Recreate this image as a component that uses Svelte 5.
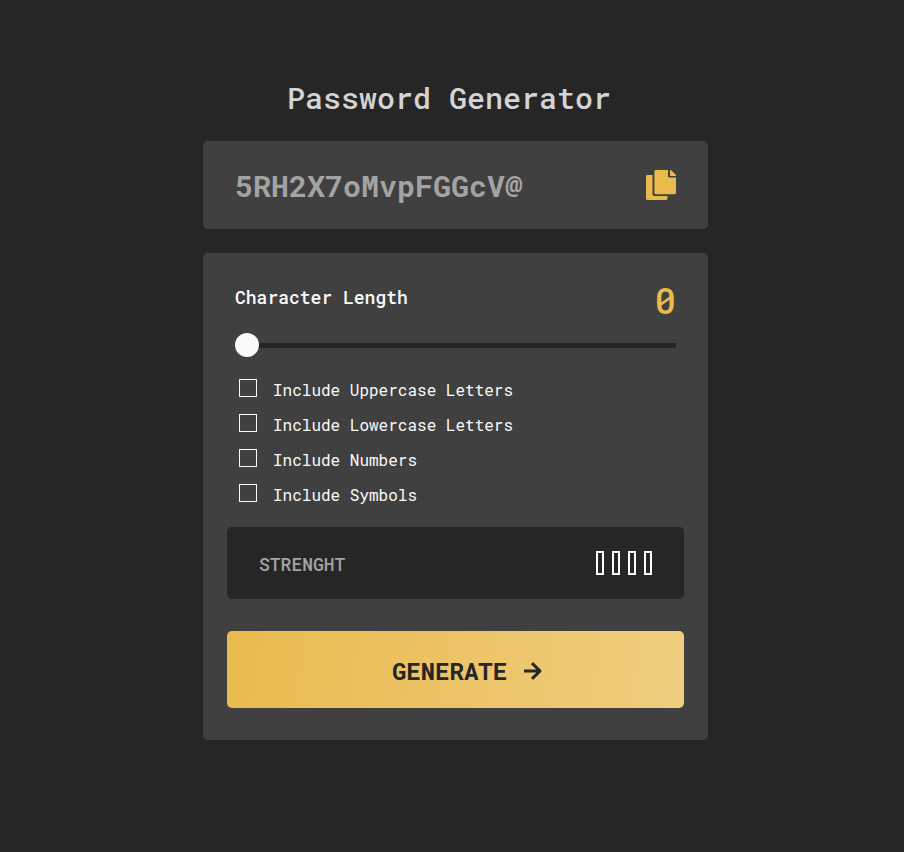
<script>
  const password = '5RH2X7oMvpFGGcV@';
  let length = $state(0);
  let options = $state([
    { id: 'uppercase', label: 'Include Uppercase Letters', checked: false },
    { id: 'lowercase', label: 'Include Lowercase Letters', checked: false },
    { id: 'numbers', label: 'Include Numbers', checked: false },
    { id: 'symbols', label: 'Include Symbols', checked: false }
  ]);
</script>

<main>
  <h1>Password Generator</h1>

  <section class="panel result">
    <output>{password}</output>
    <button class="copy" type="button" aria-label="Copy password">
      <svg width="30" height="30" viewBox="0 0 30 30" fill="currentColor" aria-hidden="true">
        <path d="M6.5 5v19c0 1.2.8 2 2 2h13v2.6c0 .8-.6 1.4-1.4 1.4H1.4C.6 30 0 29.4 0 28.6V6.4C0 5.6.6 5 1.4 5z" />
        <path d="M9.800 0H22v6.100C22 6.900 22.600 7.500 23.400 7.500H30v15.300c0 .8-.6 1.400-1.400 1.400H9.800c-.8 0-1.400-.6-1.400-1.400V1.400C8.400.6 9 0 9.800 0z" />
        <path d="M24 0h.4c.4 0 .7.100 1 .4l4.200 4.200c.3.300.4.600.4 1V6h-6z" />
      </svg>
    </button>
  </section>

  <form class="panel settings" onsubmit={(e) => e.preventDefault()}>
    <div class="length">
      <label for="length">Character Length</label>
      <output for="length">{length}</output>
    </div>
    <input id="length" class="slider" type="range" min="0" max="20" bind:value={length} />

    <div class="options">
      {#each options as option (option.id)}
        <div class="option">
          <input id={option.id} type="checkbox" bind:checked={option.checked} />
          <label for={option.id}>{option.label}</label>
        </div>
      {/each}
    </div>

    <div class="strength">
      <span>STRENGHT</span>
      <div class="bars">
        {#each Array(4) as _}
          <i></i>
        {/each}
      </div>
    </div>

    <button class="generate" type="submit">
      GENERATE
      <svg width="20" height="18" viewBox="0 0 20 18" fill="none" stroke="currentColor" stroke-width="3" stroke-linejoin="round" aria-hidden="true">
        <path d="M1 9h16M9 1.100L17 9l-8 7.900" />
      </svg>
    </button>
  </form>
</main>

<style>
  :global(body) {
    background: #262626;
  }
  main {
    box-sizing: border-box;
    max-width: 512px;
    margin: 0 auto;
    padding: 78px 0 40px 7px;
    font-family: "Roboto Mono", "DejaVu Sans Mono", monospace;
    color: #fafafa;
  }
  h1 {
    margin: 0 0 23px;
    padding-right: 13px;
    font-size: 30px;
    line-height: 40px;
    font-weight: 500;
    text-align: center;
    color: #d4d4d4;
  }
  .panel {
    background: #404040;
    border-radius: 5px;
  }
  .result {
    display: flex;
    align-items: center;
    justify-content: space-between;
    padding: 23px 32px;
    margin-bottom: 24px;
  }
  .result output {
    padding-top: 2px;
    font-size: 30px;
    line-height: 40px;
    font-weight: 700;
    color: #a3a3a3;
  }
  button {
    border: 0;
    font: inherit;
    cursor: pointer;
  }
  .copy {
    display: flex;
    padding: 0;
    background: none;
    color: #e9ba4c;
  }
  .settings {
    display: flex;
    flex-direction: column;
    padding: 24px 24px 32px;
  }
  .length {
    display: flex;
    justify-content: space-between;
    height: 48px;
    padding: 0 8px;
  }
  .length label {
    padding-top: 8px;
    font-size: 18px;
    line-height: 24px;
    font-weight: 500;
  }
  .length output {
    font-size: 36px;
    line-height: 46px;
    font-weight: 500;
    color: #e9ba4c;
  }
  .slider {
    appearance: none;
    height: 24px;
    margin: 8px 8px 0;
    background: none;
  }
  .slider::-webkit-slider-runnable-track {
    height: 5px;
    background: #262626;
  }
  .slider::-webkit-slider-thumb {
    appearance: none;
    width: 24px;
    height: 24px;
    margin-top: -10px;
    border-radius: 50%;
    background: #fafafa;
  }
  .options {
    display: flex;
    flex-direction: column;
    gap: 11px;
    padding: 19px 12px 22px;
  }
  .option {
    display: flex;
    align-items: center;
    gap: 16px;
    height: 24px;
  }
  .option input {
    appearance: none;
    box-sizing: border-box;
    width: 18px;
    height: 18px;
    margin: 0;
    border: 1px solid #fafafa;
  }
  .option input:checked {
    background: #e9ba4c;
  }
  .option label {
    padding-top: 4px;
    font-size: 16px;
    line-height: 20px;
  }
  .strength {
    display: flex;
    align-items: center;
    justify-content: space-between;
    padding: 23px 32px;
    margin-bottom: 32px;
    border-radius: 5px;
    background: #262626;
  }
  .strength span {
    padding-top: 2px;
    font-size: 18px;
    line-height: 24px;
    font-weight: 500;
    color: #a3a3a3;
  }
  .bars {
    display: flex;
    gap: 8px;
  }
  .bars i {
    box-sizing: border-box;
    width: 8px;
    height: 24px;
    border: 2px solid #fff;
  }
  .generate {
    display: flex;
    align-items: center;
    justify-content: center;
    gap: 16px;
    padding: 24px 0 21px 24px;
    border-radius: 5px;
    background: linear-gradient(100deg, #e9ba4c, #f0ce80);
    color: #262626;
    font-size: 24px;
    line-height: 32px;
    font-weight: 700;
  }
</style>
